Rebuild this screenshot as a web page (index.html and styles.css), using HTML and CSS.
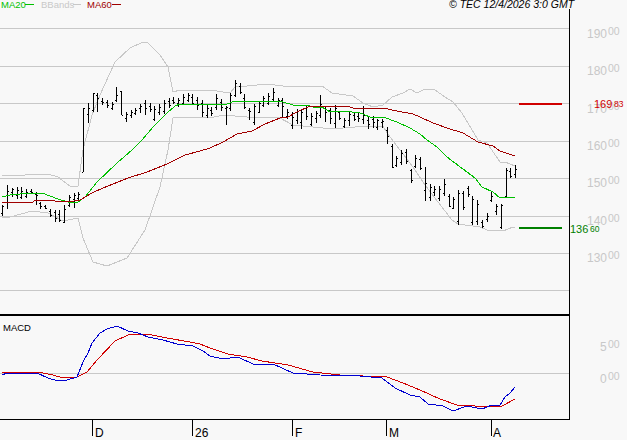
FILE: index.html
```html
<!DOCTYPE html>
<html lang="en">
<head>
<meta charset="utf-8">
<title>Chart</title>
<link rel="stylesheet" href="styles.css">
</head>
<body>
<svg class="chart" width="627" height="440" viewBox="0 0 627 440" xmlns="http://www.w3.org/2000/svg">
  <g class="grid">
    <path d="M0 28.5H569M0 66.5H569M0 103.5H569M0 141.5H569M0 178.5H569M0 216.5H569M0 253.5H569M0 290.5H569M0 373.5H569"/>
  </g>
  <g class="gray-line">
    <polyline points="2,176 48,174 58,177 70,186 78,186 83,150 92,115 100,95 115,62 130,48 143,42 148,43 160,55 168,67 173,92 180,90 210,90 230,93 235,87 247,86 267,84 283,86 322,86 332,93 353,96 363,103 373,107 383,105 392,97 403,93 410,89 417,93 425,89 435,90 445,97 453,102 462,113 478,140 487,143 500,162 505,162 515,166"/>
    <polyline points="2,218 10,217 32,211 48,213 63,221 78,218 83,238 93,262 107,266 127,258 145,230 160,187 168,150 173,118 182,117 210,118 223,115 247,117 278,117 293,125 323,128 343,128 367,126 383,126 387,133 413,167 425,185 438,202 452,220 458,224 480,227 487,230 503,231 513,227 515,228"/>
  </g>
  <path id="bars" class="bars" d=""/>
  <polyline class="ma20" points="2,197 10,195 20,194 33,193 42,193 50,196 58,199 68,202 78,202 85,197 97,182 117,163 132,150 142,140 153,127 167,113 175,106 180,104 208,105 227,104 235,101 253,101 283,102 293,105 310,106 313,107 322,107 330,112 340,111 352,112 358,112 370,117 383,117 397,122 410,128 420,134 427,140 437,147 447,157 455,163 463,169 475,178 482,187 493,192 500,198 507,197 515,198"/>
  <polyline class="ma60" points="2,202 33,202 35,200 52,200 55,201 68,202 80,200 92,193 103,188 128,178 147,172 167,164 185,155 200,151 210,148 223,142 237,134 252,131 265,124 280,118 288,117 297,112 310,106 333,106 350,107 353,108 370,108 383,108 397,111 413,114 420,117 433,123 447,128 463,133 478,142 493,146 500,151 515,156"/>

  <polyline class="macd-signal" points="2,372 38,372 53,375 63,378 77,377 87,372 97,360 115,341 128,335 147,334 167,338 190,342 200,344 210,348 228,354 247,357 262,361 288,365 313,372 340,375 363,376 387,377 403,383 420,390 440,399 457,405 475,406 483,407 490,406 502,406 515,399"/>
  <polyline class="macd-line" points="2,375 7,373 37,373 48,378 58,381 67,380 77,377 83,362 88,353 92,343 100,333 107,329 117,326 128,331 138,333 148,337 163,340 177,344 193,346 203,351 210,356 223,359 238,357 255,365 273,364 293,373 320,375 360,376 382,378 395,388 410,395 420,397 428,404 443,406 453,411 467,406 482,409 492,405 500,405 505,397 510,393 515,387"/>

  <path class="frame-thin" d="M569.5 9V419.5H0M92.5 420V436M192.5 420V436M292.5 420V436M386.5 420V436M491.5 420V436"/>
  <path class="frame-thick" d="M0 315H570"/>

  <path class="key-ma20" d="M25 4.5H34"/>
  <path class="key-bb" d="M73 4.5H81"/>
  <path class="key-ma60" d="M112 4.5H121"/>
  <path class="level-up" d="M519 104H562"/>
  <path class="level-down" d="M519 228H562"/>

  <text class="legend legend-green" x="1" y="8">MA20</text>
  <text class="legend legend-gray" x="41" y="8">BBands</text>
  <text class="legend legend-red" x="87" y="8">MA60</text>
  <text class="stamp" x="449" y="8">© TEC 12/4/2026 3:0 GMT</text>

  <g class="axis">
    <text class="big" x="587" y="38">190</text><text class="small" x="608" y="35">00</text>
    <text class="big" x="587" y="75">180</text><text class="small" x="608" y="72">00</text>
    <text class="big" x="587" y="113">170</text><text class="small" x="608" y="110">00</text>
    <text class="big" x="587" y="150">160</text><text class="small" x="608" y="147">00</text>
    <text class="big" x="587" y="187">150</text><text class="small" x="608" y="184">00</text>
    <text class="big" x="587" y="225">140</text><text class="small" x="608" y="222">00</text>
    <text class="big" x="587" y="262">130</text><text class="small" x="608" y="259">00</text>
    <text class="big" x="600" y="351">5</text><text class="small" x="608" y="348">00</text>
    <text class="big" x="600" y="383">0</text><text class="small" x="608" y="380">00</text>
  </g>
  <g class="level-red-text">
    <text class="level-big" x="594" y="108">169</text><text class="level-small" x="614" y="107">83</text>
  </g>
  <g class="level-green-text">
    <text class="level-big" x="570" y="233">136</text><text class="level-small" x="590" y="232">60</text>
  </g>
  <text class="macd-title" x="3" y="331">MACD</text>
  <g class="months">
    <text x="95" y="437">D</text>
    <text x="195" y="437">26</text>
    <text x="295" y="437">F</text>
    <text x="389" y="437">M</text>
    <text x="493" y="437">A</text>
  </g>
</svg>
<script src="app.js"></script>
</body>
</html>
```
FILE: styles.css
```css
html, body {
  margin: 0;
  padding: 0;
  background: #f8f8f8;
}
.chart {
  display: block;
  background: #f8f8f8;
  font-family: "Liberation Sans", Arial, sans-serif;
}
.chart path, .chart polyline {
  fill: none;
  shape-rendering: crispEdges;
}
.grid path { stroke: #c8c8c8; stroke-width: 1; }
.gray-line polyline { stroke: #c8c8c8; stroke-width: 1; }
.bars { stroke: #000; stroke-width: 1; }
.ma20 { stroke: #00c000; stroke-width: 1; }
.ma60 { stroke: #a00000; stroke-width: 1; }
.macd-line { stroke: #0000d0; stroke-width: 1; }
.macd-signal { stroke: #d00000; stroke-width: 1; }
.frame-thin { stroke: #000; stroke-width: 1; }
.frame-thick { stroke: #000; stroke-width: 2; }
.key-ma20 { stroke: #00c000; stroke-width: 1; }
.key-bb { stroke: #c8c8c8; stroke-width: 1; }
.key-ma60 { stroke: #a00000; stroke-width: 1; }
.level-up { stroke: #d00000; stroke-width: 2; }
.level-down { stroke: #008000; stroke-width: 2; }
.legend { font-size: 9.5px; }
.legend-green { fill: #00c000; }
.legend-gray { fill: #c8c8c8; }
.legend-red { fill: #a00000; }
.stamp { font-size: 10.5px; font-style: italic; fill: #000; }
.big { font-size: 12px; }
.small { font-size: 10.5px; }
.level-big { font-size: 11px; }
.level-small { font-size: 8.5px; }
.axis { fill: #c8c8c8; }
.level-red-text { fill: #d00000; }
.level-green-text { fill: #008000; }
.macd-title { font-size: 9.5px; fill: #000; }
.months { font-size: 12px; fill: #000; }
```
FILE: app.js
```js
// Each bar: [high, low, open, close]
var bars = [
[205,216,213,206],[185,209,202,191],[188,197,192,189],[187,199,195,190],[187,199,197,191],[189,198,196,192],[189,194,191,192],[192,205,194,195],
[202,209,203,206],[205,209,206,208],[209,217,211,215],[210,222,212,218],[210,222,214,220],[205,223,222,209],[195,207,205,197],[193,208,199,195],
[192,202,198,194],[108,172,172,108],[103,123,114,108],[93,112,110,93],[93,112,95,98],[98,105,101,102],[100,108,102,105],[102,110,108,104],
[87,102,100,95],[91,115,91,115],[112,122,118,114],[110,118,115,112],[108,115,113,110],[104,113,108,106],[100,115,103,108],[103,112,106,109],
[106,121,119,109],[104,115,112,107],[100,114,111,103],[98,108,101,105],[97,104,100,102],[98,107,103,100],[94,105,103,97],[93,102,100,95],
[94,105,97,103],[97,110,100,105],[100,117,103,112],[105,118,115,108],[107,116,110,113],[94,110,107,98],[99,111,102,107],[106,125,108,107],
[93,111,108,95],[80,97,95,83],[83,94,86,92],[94,109,98,107],[108,120,110,111],[104,125,122,106],[102,113,112,103],[96,107,105,98],
[93,105,103,96],[88,102,99,92],[98,107,105,100],[98,118,100,106],[109,119,116,112],[112,129,125,117],[109,124,120,111],[109,129,122,112],
[106,120,108,116],[113,126,124,116],[111,123,118,113],[95,118,115,104],[106,122,108,112],[108,124,110,118],[105,128,123,108],[111,120,112,118],
[118,128,126,120],[112,126,120,114],[112,121,115,119],[113,122,116,118],[106,124,119,115],[117,129,120,124],[116,128,119,122],[119,130,127,120],
[119,128,122,121],[127,144,130,136],[144,168,146,167],[156,167,165,158],[150,165,162,153],[149,164,152,161],[169,183,170,180],[155,168,166,158],
[157,170,159,168],[167,201,190,183],[184,201,197,187],[186,196,192,189],[186,201,198,189],[179,196,193,184],[194,207,196,206],[197,209,208,199],
[190,225,221,193],[191,210,193,207],[186,197,188,194],[196,225,222,199],[200,225,221,204],[220,228,222,226],[213,222,219,216],[192,202,200,196],
[204,215,211,206],[204,229,227,205],[168,197,196,170],[168,178,171,176],[165,178,174,169]
];
var d = '';
for (var i = 0; i < bars.length; i++) {
  var x = Math.round(2.4 + 4.747 * i);
  var b = bars[i];
  d += 'M' + (x + 0.5) + ' ' + b[0] + 'V' + b[1];
  d += 'M' + (x - 1) + ' ' + (b[2] + 0.5) + 'h1';
  d += 'M' + (x + 1) + ' ' + (b[3] + 0.5) + 'h1';
}
document.getElementById('bars').setAttribute('d', d);
```
